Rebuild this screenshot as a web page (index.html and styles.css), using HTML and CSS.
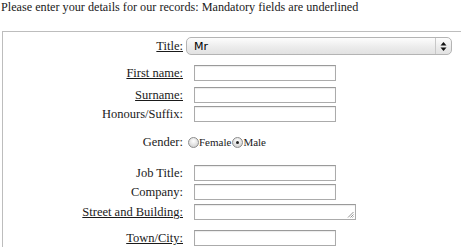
FILE: index.html
```html
<!DOCTYPE html>
<html>
<head>
<meta charset="utf-8">
<link rel="stylesheet" href="styles.css">
</head>
<body>
<p class="intro">Please enter your details for our records: Mandatory fields are underlined</p>
<fieldset class="details">
  <div class="row row-title">
    <label class="lbl req">Title:</label>
    <div class="select"><span class="select-val">Mr</span><span class="select-btn"><svg width="7" height="11" viewBox="0 0 7 11"><path d="M3.5 1 L6.5 4.5 L0.5 4.5 Z" fill="#111"/><path d="M3.5 10 L6.5 6.5 L0.5 6.5 Z" fill="#111"/></svg></span></div>
  </div>
  <div class="row row-first">
    <label class="lbl req">First name:</label>
    <span class="field"></span>
  </div>
  <div class="row row-surname">
    <label class="lbl req">Surname:</label>
    <span class="field"></span>
  </div>
  <div class="row row-honours">
    <label class="lbl">Honours/Suffix:</label>
    <span class="field"></span>
  </div>
  <div class="row row-gender">
    <label class="lbl">Gender:</label>
    <div class="radios">
      <span class="radio"></span><span class="radio-lbl">Female</span>
      <span class="radio checked"></span><span class="radio-lbl">Male</span>
    </div>
  </div>
  <div class="row row-job">
    <label class="lbl">Job Title:</label>
    <span class="field"></span>
  </div>
  <div class="row row-company">
    <label class="lbl">Company:</label>
    <span class="field"></span>
  </div>
  <div class="row row-street">
    <label class="lbl req">Street and Building:</label>
    <span class="field area"><svg class="grip" width="7" height="7" viewBox="0 0 7 7"><path d="M6.5 1 L1 6.5 M6.5 3.5 L3.5 6.5 M6.5 5.5 L5.5 6.5" stroke="#777" stroke-width="0.8"/></svg></span>
  </div>
  <div class="row row-town">
    <label class="lbl req">Town/City:</label>
    <span class="field"></span>
  </div>
</fieldset>
</body>
</html>
```

FILE: styles.css
```css
html, body {
  margin: 0;
  padding: 0;
  background: #fff;
}
body {
  font-family: "Liberation Serif", "Times New Roman", serif;
  font-size: 12px;
  color: #1a1a1a;
  width: 461px;
  height: 247px;
  overflow: hidden;
}
.intro {
  margin: 0;
  padding: 0 0 0 1px;
  line-height: 15px;
  font-size: 12.2px;
}
.details {
  margin: 16px 0 0 2px;
  padding: 0 0 2px 0;
  border: 1px solid #bdbdbd;
  border-right: none;
  border-bottom: none;
  width: 459px;
  box-sizing: border-box;
}
.row {
  display: flex;
  align-items: center;
  height: 16px;
}
.lbl {
  width: 180px;
  text-align: right;
  flex: none;
  line-height: 16px;
  font-size: 12.5px;
}
.req {
  text-decoration: underline;
}
.field {
  display: block;
  margin-left: 11px;
  width: 142px;
  height: 16px;
  box-sizing: border-box;
  border: 1px solid #ababab;
  border-top-color: #9a9a9a;
  box-shadow: inset 0 1px 1px rgba(0,0,0,0.08);
  background: #fff;
  position: relative;
}
.area {
  width: 162px;
}
.grip {
  position: absolute;
  right: 1px;
  bottom: 1px;
}
.row-title {
  height: 18px;
  margin-top: 5px;
}
.select {
  margin-left: 3px;
  width: 266px;
  height: 18px;
  box-sizing: border-box;
  border: 1px solid #b4b4b4;
  border-radius: 5px;
  background: linear-gradient(#fdfdfd, #ececec 55%, #e2e2e2);
  display: flex;
  align-items: center;
  font-family: "DejaVu Sans", "Liberation Sans", sans-serif;
  font-size: 11px;
  color: #000;
}
.select-val {
  flex: 1;
  padding-left: 7px;
}
.select-btn {
  width: 15px;
  height: 16px;
  border-left: 1px solid #c8c8c8;
  display: flex;
  align-items: center;
  justify-content: center;
}
.row-first { margin-top: 10px; }
.row-surname { margin-top: 6px; }
.row-honours { margin-top: 3px; }
.row-gender { margin-top: 12px; }
.row-job { margin-top: 15px; }
.row-company { margin-top: 3px; }
.row-street { margin-top: 4px; }
.row-town { margin-top: 10px; }
.radios {
  display: flex;
  align-items: center;
  margin-left: 5px;
}
.radio {
  width: 11px;
  height: 11px;
  box-sizing: border-box;
  border-radius: 50%;
  border: 1px solid #8c8c8c;
  background: radial-gradient(circle at 50% 35%, #ffffff, #d8d8d8 70%, #bdbdbd);
  position: relative;
}
.radio.checked::after {
  content: "";
  position: absolute;
  left: 3px;
  top: 3px;
  width: 3px;
  height: 3px;
  border-radius: 50%;
  background: #222;
}
.radio-lbl {
  font-size: 11px;
  margin-right: 1px;
}
```
